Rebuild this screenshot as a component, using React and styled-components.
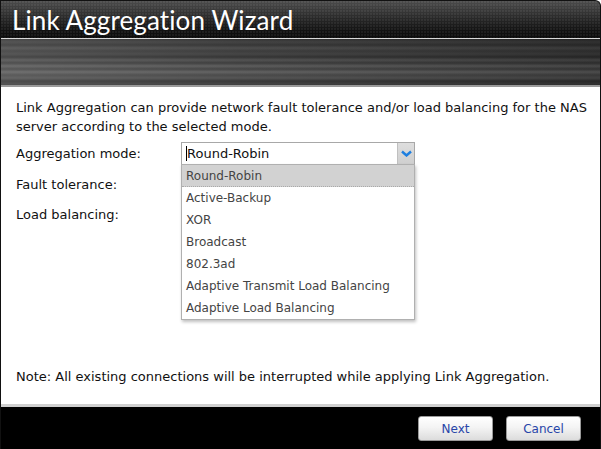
import React from 'react'
import styled, { createGlobalStyle } from 'styled-components'

const Global = createGlobalStyle`
    html, body {
        margin: 0;
        padding: 0;
        background: #fff;
    }
    * {
        box-sizing: border-box;
    }
`

const Window = styled.div`
    width: 601px;
    height: 449px;
    display: flex;
    flex-direction: column;
    border: 1px solid #111;
    border-bottom: none;
    border-top-right-radius: 6px;
    overflow: hidden;
    background: #000;
    font-family: Tahoma, "DejaVu Sans", sans-serif;
`

const TitleBar = styled.div`
    height: 38px;
    flex: none;
    display: flex;
    align-items: center;
    padding: 0 0 0 11px;
    background:
        radial-gradient(circle at 1px 1px, rgba(255, 255, 255, 0.06) 1px, transparent 1.5px) 0 0 / 3px 3px,
        linear-gradient(#4c4c4c, #2a2a2a 45%, #121212 80%, #0c0c0c);
    border-bottom: 1px solid #d8d8d8;
`

const Title = styled.h1`
    margin: 0;
    font-family: "Lato", "DejaVu Sans", sans-serif;
    font-weight: 400;
    font-size: 26px;
    color: #fff;
    letter-spacing: 0.1px;
`

const Banner = styled.div`
    height: 48px;
    flex: none;
    background:
        linear-gradient(to right, rgba(255, 255, 255, 0.14), rgba(255, 255, 255, 0.05) 40%, rgba(0, 0, 0, 0.15) 100%),
        linear-gradient(
            #2a2a2a 0px, #3a3a3a 3px, #2c2c2c 6px, #444 9px, #333 12px, #3c3c3c 15px,
            #2a2a2a 18px, #4a4a4a 21px, #333 24px, #555 27px, #3a3a3a 30px,
            #5a5a5a 33px, #404040 36px, #4c4c4c 39px, #2e2e2e 42px, #3a3a3a 45px, #222 48px
        );
    border-bottom: 2px solid #9a9a9a;
`

const Content = styled.div`
    flex: 1;
    background: #fff;
    border-bottom: 3px solid #d0d0d0;
    padding: 11px 6px 0 15px;
    display: flex;
    flex-direction: column;
    color: #111;
    font-size: 13px;
`

const Intro = styled.p`
    margin: 0;
    line-height: 19px;
`

const Form = styled.div`
    margin-top: 6px;
    display: grid;
    grid-template-columns: 165px 234px;
    grid-auto-rows: 30.5px;
    align-items: start;
`

const Label = styled.div`
    line-height: 23px;
`

const SelectWrap = styled.div`
    position: relative;
    width: 234px;
`

const Select = styled.div`
    height: 23px;
    border: 1px solid #a8a8a8;
    display: flex;
    align-items: center;
    background: #fff;
    padding-left: 4px;
`

const SelectValue = styled.span`
    flex: 1;
    font-size: 13px;
    color: #111;
    border-left: 1px solid #000;
    line-height: 15px;
`

const ArrowBox = styled.div`
    width: 17px;
    height: 21px;
    background: linear-gradient(#dedede, #cfcfcf);
    border-left: 1px solid #c0c0c0;
    display: grid;
    place-content: center;
`

const Menu = styled.ul`
    position: absolute;
    left: 0;
    top: 22px;
    width: 234px;
    margin: 0;
    padding: 0;
    list-style: none;
    background: #fff;
    border: 1px solid #b0b0b0;
    box-shadow: 1px 2px 3px rgba(0, 0, 0, 0.25);
    z-index: 2;
`

const Item = styled.li`
    height: 22px;
    line-height: 22px;
    padding-left: 4px;
    font-size: 12px;
    color: #444;
    background: ${p => (p.$active ? '#d2d2d2' : '#fff')};
    border-bottom: ${p => (p.$active ? '1px dotted #aaa' : 'none')};
`

const Note = styled.p`
    margin: auto 0 18px 0;
    line-height: 18px;
`

const Footer = styled.div`
    height: 42px;
    flex: none;
    background: #000;
    display: flex;
    justify-content: flex-end;
    align-items: center;
    gap: 13px;
    padding: 1px 19px 0 0;
`

const Button = styled.button`
    width: 75px;
    height: 25px;
    border: 1px solid #9a9a9a;
    border-radius: 3px;
    background: linear-gradient(#ffffff, #f4f4f4 45%, #dcdcdc);
    color: #2845a8;
    font-family: Tahoma, "DejaVu Sans", sans-serif;
    font-size: 12px;
    cursor: pointer;
    padding: 0;
`

const modes = [
    'Round-Robin',
    'Active-Backup',
    'XOR',
    'Broadcast',
    '802.3ad',
    'Adaptive Transmit Load Balancing',
    'Adaptive Load Balancing',
]

const Chevron = () => (
    <svg width="11" height="7" viewBox="0 0 11 7">
        <path d="M1 1.5 L5.5 5.5 L10 1.5" fill="none" stroke="#1e7fe0" strokeWidth="2.4" />
    </svg>
)

const App = () => {
    return (
        <>
            <Global />
            <Window>
                <TitleBar>
                    <Title>Link Aggregation Wizard</Title>
                </TitleBar>
                <Banner />
                <Content>
                    <Intro>
                        Link Aggregation can provide network fault tolerance and/or load balancing for the NAS
                        server according to the selected mode.
                    </Intro>
                    <Form>
                        <Label>Aggregation mode:</Label>
                        <SelectWrap>
                            <Select>
                                <SelectValue>Round-Robin</SelectValue>
                                <ArrowBox>
                                    <Chevron />
                                </ArrowBox>
                            </Select>
                            <Menu>
                                {modes.map((m, i) => (
                                    <Item key={m} $active={i === 0}>{m}</Item>
                                ))}
                            </Menu>
                        </SelectWrap>
                        <Label>Fault tolerance:</Label>
                        <div />
                        <Label>Load balancing:</Label>
                        <div />
                    </Form>
                    <Note>Note: All existing connections will be interrupted while applying Link Aggregation.</Note>
                </Content>
                <Footer>
                    <Button>Next</Button>
                    <Button>Cancel</Button>
                </Footer>
            </Window>
        </>
    )
}

export default App
